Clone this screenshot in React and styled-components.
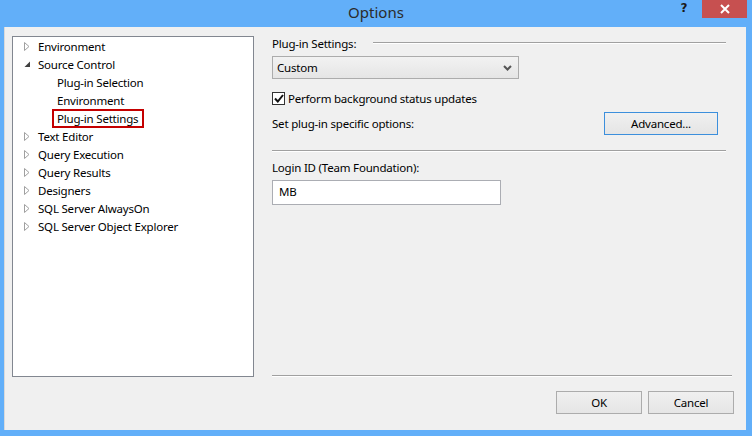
import React from "react";
import styled, { createGlobalStyle } from "styled-components";

const Global = createGlobalStyle`
  html, body { margin: 0; padding: 0; }
  body {
    width: 752px; height: 436px; overflow: hidden;
    background: #62aff9;
    font-family: "Noto Sans", "Open Sans", sans-serif;
    font-size: 11.5px; letter-spacing: -0.2px; color: #000;
  }
`;

const Window = styled.div`
  width: 752px; height: 436px;
  display: flex; flex-direction: column;
  background: #62aff9;
`;

const TitleBar = styled.div`
  height: 27px;
  display: grid;
  grid-template-columns: 1fr auto 1fr;
`;

const Title = styled.div`
  grid-column: 2;
  font-size: 15px;
  letter-spacing: 0;
  color: #2b2b2b;
  line-height: 25px;
`;

const Controls = styled.div`
  grid-column: 3;
  justify-self: end;
  align-self: start;
  display: flex;
  align-items: flex-start;
  margin-right: 5px;
`;

const Help = styled.div`
  width: 14px; height: 18px;
  margin-right: 11px;
  font-family: "DejaVu Sans", sans-serif;
  font-weight: bold;
  font-size: 12px;
  line-height: 17px;
  color: #1a1a1a;
  text-align: center;
`;

const Close = styled.div`
  width: 45px; height: 18px;
  background: #c75050;
  display: flex; align-items: center; justify-content: center;
`;

const Client = styled.div`
  flex: 1;
  margin: 0 6px 6px 4px;
  background: #f0f0f0;
  border-left: 1px solid #dadada;
  display: flex; flex-direction: column;
  padding: 9px 0 0 7px;
`;

const Main = styled.div`
  display: flex;
  height: 341px;
`;

const Tree = styled.div`
  width: 240px;
  height: 339px;
  background: #fff;
  border: 1px solid #828790;
`;

const Row = styled.div`
  height: 18px;
  display: flex; align-items: center;
  padding-left: ${p => (p.$level ? 39 : 11)}px;
  white-space: nowrap;
`;

const Arrow = styled.span`
  width: 14px; display: flex; align-items: center;
`;

const Label = styled.span`
  padding: 0 ${p => (p.$selected ? 4 : 2)}px 0 3px;
  border: 2px solid ${p => (p.$selected ? "#c40000" : "transparent")};
  line-height: 15px;
  margin-left: ${p => (p.$level ? 0 : -5)}px;
`;

const Panel = styled.div`
  margin-left: 18px;
  width: 460px;
  display: flex; flex-direction: column;
`;

const Header = styled.div`
  display: flex; align-items: center;
  height: 14px;
  padding-right: 6px;
`;

const Line = styled.div`
  flex: 1;
  height: 0;
  border-top: 1px solid #a0a0a0;
  border-bottom: 1px solid #fff;
  margin-left: ${p => p.$ml || 0}px;
`;

const Select = styled.div`
  margin-top: 6px;
  width: 235px; height: 21px;
  border: 1px solid #acacac;
  background: linear-gradient(#f2f2f2, #e5e5e5);
  display: flex; align-items: center; justify-content: space-between;
  padding: 0 6px 0 4px;
`;

const CheckRow = styled.div`
  margin-top: 12px;
  display: flex; align-items: center;
  height: 14px;
`;

const Box = styled.div`
  width: 11px; height: 11px;
  border: 1px solid #333;
  background: #fff;
  display: flex; align-items: center; justify-content: center;
  margin-right: 3px;
`;

const OptionRow = styled.div`
  margin-top: 7px;
  display: flex; align-items: center; justify-content: space-between;
  padding-right: 14px;
`;

const Button = styled.div`
  width: ${p => p.$w}px; height: 21px;
  border: 1px solid ${p => (p.$focus ? "#3c8fdc" : "#acacac")};
  background: linear-gradient(#f0f0f0, #e5e5e5);
  display: flex; align-items: center; justify-content: center;
`;

const Separator = styled.div`
  display: flex;
  margin-top: ${p => p.$mt}px;
  padding-right: ${p => p.$pr || 0}px;
`;

const FieldLabel = styled.div`
  margin-top: 8px;
  height: 16px; line-height: 16px;
`;

const TextBox = styled.div`
  margin-top: 4px;
  width: 221px; height: 23px;
  border: 1px solid #abadb3;
  background: #fff;
  padding-left: 6px;
  line-height: 21px;
`;

const Spacer = styled.div`flex: 1;`;

const Footer = styled.div`
  display: flex; justify-content: flex-end; gap: 6px;
  margin-top: 14px;
  padding-right: 12px;
`;

const Closed = () => (
  <svg width="6" height="9" viewBox="0 0 6 9">
    <path d="M0.5 0.5 L5 4.5 L0.5 8.5 Z" fill="none" stroke="#a0a0a0" strokeWidth="1" />
  </svg>
);
const Open = () => (
  <svg width="7" height="7" viewBox="0 0 7 7">
    <path d="M6 0.5 L6 6 L0.5 6 Z" fill="#404040" />
  </svg>
);

const items = [
  { t: "Environment", l: 0 },
  { t: "Source Control", l: 0, open: true },
  { t: "Plug-in Selection", l: 1 },
  { t: "Environment", l: 1 },
  { t: "Plug-in Settings", l: 1, sel: true },
  { t: "Text Editor", l: 0 },
  { t: "Query Execution", l: 0 },
  { t: "Query Results", l: 0 },
  { t: "Designers", l: 0 },
  { t: "SQL Server AlwaysOn", l: 0 },
  { t: "SQL Server Object Explorer", l: 0 },
];

export default function App() {
  return (
    <Window>
      <Global />
      <TitleBar>
        <Title>Options</Title>
        <Controls>
          <Help>?</Help>
          <Close>
            <svg width="10" height="10" viewBox="0 0 10 10">
              <path d="M1 1 L9 9 M9 1 L1 9" stroke="#fff" strokeWidth="2" />
            </svg>
          </Close>
        </Controls>
      </TitleBar>
      <Client>
        <Main>
          <Tree>
            {items.map((it, i) => (
              <Row key={i} $level={it.l}>
                {it.l === 0 && <Arrow>{it.open ? <Open /> : <Closed />}</Arrow>}
                <Label $level={it.l} $selected={it.sel}>{it.t}</Label>
              </Row>
            ))}
          </Tree>
          <Panel>
            <Header>
              <span>Plug-in Settings:</span>
              <Line $ml={17} />
            </Header>
            <Select>
              <span>Custom</span>
              <svg width="9" height="6" viewBox="0 0 9 6">
                <path d="M1 1 L4.5 4.5 L8 1" fill="none" stroke="#555" strokeWidth="2" />
              </svg>
            </Select>
            <CheckRow>
              <Box>
                <svg width="10" height="9" viewBox="0 0 10 9">
                  <path d="M1 4.5 L3.8 7.5 L9 1" fill="none" stroke="#111" strokeWidth="2" />
                </svg>
              </Box>
              <span>Perform background status updates</span>
            </CheckRow>
            <OptionRow>
              <span>Set plug-in specific options:</span>
              <Button $w={112} $focus>Advanced...</Button>
            </OptionRow>
            <Separator $mt={15} $pr={6}><Line /></Separator>
            <FieldLabel>Login ID (Team Foundation):</FieldLabel>
            <TextBox>MB</TextBox>
            <Spacer />
            <Separator $mt={0}><Line /></Separator>
          </Panel>
        </Main>
        <Footer>
          <Button $w={84}>OK</Button>
          <Button $w={84}>Cancel</Button>
        </Footer>
      </Client>
    </Window>
  );
}
